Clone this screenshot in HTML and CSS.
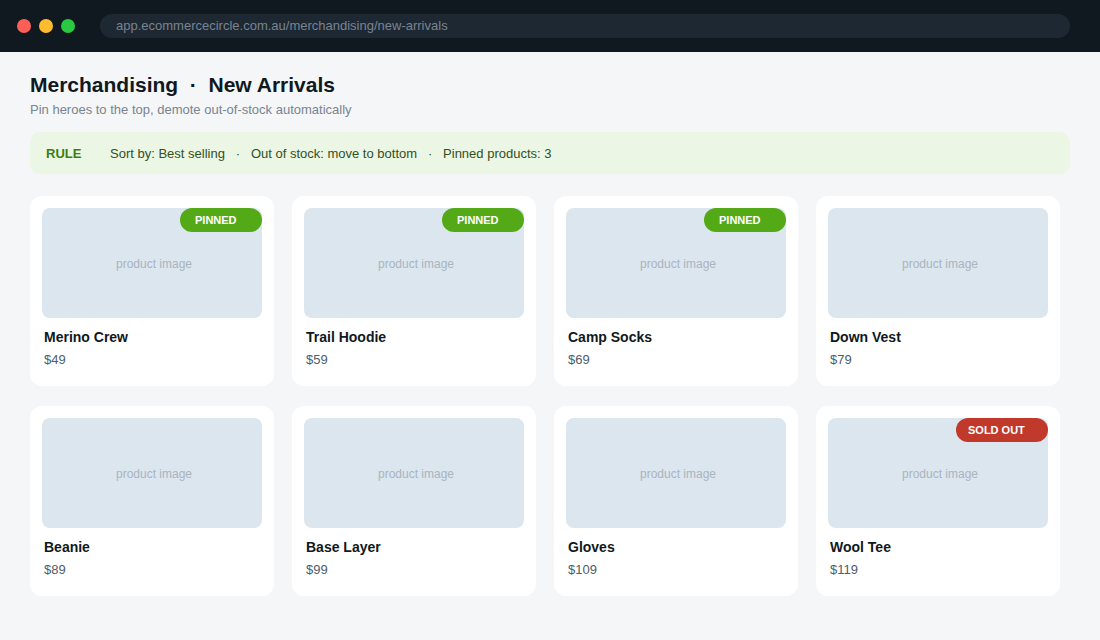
FILE: index.html
```html
<!DOCTYPE html>
<html lang="en">

<head>
    <meta charset="UTF-8">
    <meta name="viewport" content="width=device-width, initial-scale=1.0">
    <title>Merchandising - New Arrivals</title>
    <link rel="stylesheet" href="styles.css">
</head>

<body>

    <header class="browser-bar">
        <div class="dots">
            <span class="dot red"></span>
            <span class="dot yellow"></span>
            <span class="dot green"></span>
        </div>
        <div class="address">app.ecommercecircle.com.au/merchandising/new-arrivals</div>
    </header>

    <main class="container">
        <h1>Merchandising  ·  New Arrivals</h1>
        <p class="subtitle">Pin heroes to the top, demote out-of-stock automatically</p>

        <div class="rule">
            <strong>RULE</strong>
            <span class="rule-text">Sort by: Best selling   ·   Out of stock: move to bottom   ·   Pinned products: 3</span>
        </div>

        <div class="products">
            <div class="card">
                <div class="image">product image<span class="badge pinned">PINNED</span></div>
                <h2>Merino Crew</h2>
                <p class="price">$49</p>
            </div>
            <div class="card">
                <div class="image">product image<span class="badge pinned">PINNED</span></div>
                <h2>Trail Hoodie</h2>
                <p class="price">$59</p>
            </div>
            <div class="card">
                <div class="image">product image<span class="badge pinned">PINNED</span></div>
                <h2>Camp Socks</h2>
                <p class="price">$69</p>
            </div>
            <div class="card">
                <div class="image">product image</div>
                <h2>Down Vest</h2>
                <p class="price">$79</p>
            </div>
            <div class="card">
                <div class="image">product image</div>
                <h2>Beanie</h2>
                <p class="price">$89</p>
            </div>
            <div class="card">
                <div class="image">product image</div>
                <h2>Base Layer</h2>
                <p class="price">$99</p>
            </div>
            <div class="card">
                <div class="image">product image</div>
                <h2>Gloves</h2>
                <p class="price">$109</p>
            </div>
            <div class="card">
                <div class="image">product image<span class="badge sold-out">SOLD OUT</span></div>
                <h2>Wool Tee</h2>
                <p class="price">$119</p>
            </div>
        </div>
    </main>

</body>

</html>
```

FILE: styles.css
```css
* {
    box-sizing: border-box;
}

body {
    font-family: "Liberation Sans", Arial, sans-serif;
    background-color: #f4f6f8;
    color: #101820;
    margin: 0;
    min-height: 100vh;
}

.browser-bar {
    display: flex;
    align-items: center;
    height: 52px;
    padding: 0 30px 0 17px;
    background-color: #101820;
}

.dots {
    display: flex;
    gap: 8px;
    margin-right: 25px;
}

.dot {
    width: 14px;
    height: 14px;
    border-radius: 50%;
}

.red {
    background-color: #ff5f57;
}

.yellow {
    background-color: #febc2e;
}

.green {
    background-color: #28c840;
}

.address {
    flex-grow: 1;
    height: 24px;
    line-height: 24px;
    padding: 0 16px;
    border-radius: 12px;
    background-color: #1e2832;
    color: #788490;
    font-size: 13px;
}

.container {
    padding: 20px 30px;
}

h1 {
    margin: 0;
    font-size: 21px;
    line-height: 26px;
    white-space: pre;
}

.subtitle {
    margin: 4px 0 14px;
    font-size: 13px;
    line-height: 16px;
    color: #788490;
}

.rule {
    display: flex;
    align-items: center;
    height: 42px;
    padding: 0 16px;
    border-radius: 10px;
    background-color: #ecf6e4;
    font-size: 13px;
}

.rule strong {
    width: 64px;
    color: #3c7d14;
}

.rule-text {
    color: #32501e;
    white-space: pre;
}

.products {
    display: grid;
    grid-template-columns: repeat(4, 244px);
    gap: 20px 18px;
    margin-top: 22px;
}

.card {
    height: 190px;
    padding: 12px;
    border-radius: 12px;
    background-color: #fff;
}

.image {
    position: relative;
    display: flex;
    align-items: center;
    justify-content: center;
    height: 110px;
    padding-top: 2px;
    padding-left: 4px;
    border-radius: 8px;
    background-color: #dce6ef;
    color: #aab4be;
    font-size: 12px;
}

.badge {
    position: absolute;
    top: 0;
    right: 0;
    height: 24px;
    line-height: 24px;
    border-radius: 12px;
    color: #fff;
    font-size: 11px;
    font-weight: bold;
}

.pinned {
    width: 82px;
    padding-left: 15px;
    background-color: #54aa16;
}

.sold-out {
    width: 92px;
    padding-left: 12px;
    background-color: #c0392b;
}

.card h2 {
    margin: 11px 2px 0;
    font-size: 14px;
    line-height: 16px;
}

.price {
    margin: 7px 2px 0;
    font-size: 13px;
    line-height: 16px;
    color: #505c68;
}
```
